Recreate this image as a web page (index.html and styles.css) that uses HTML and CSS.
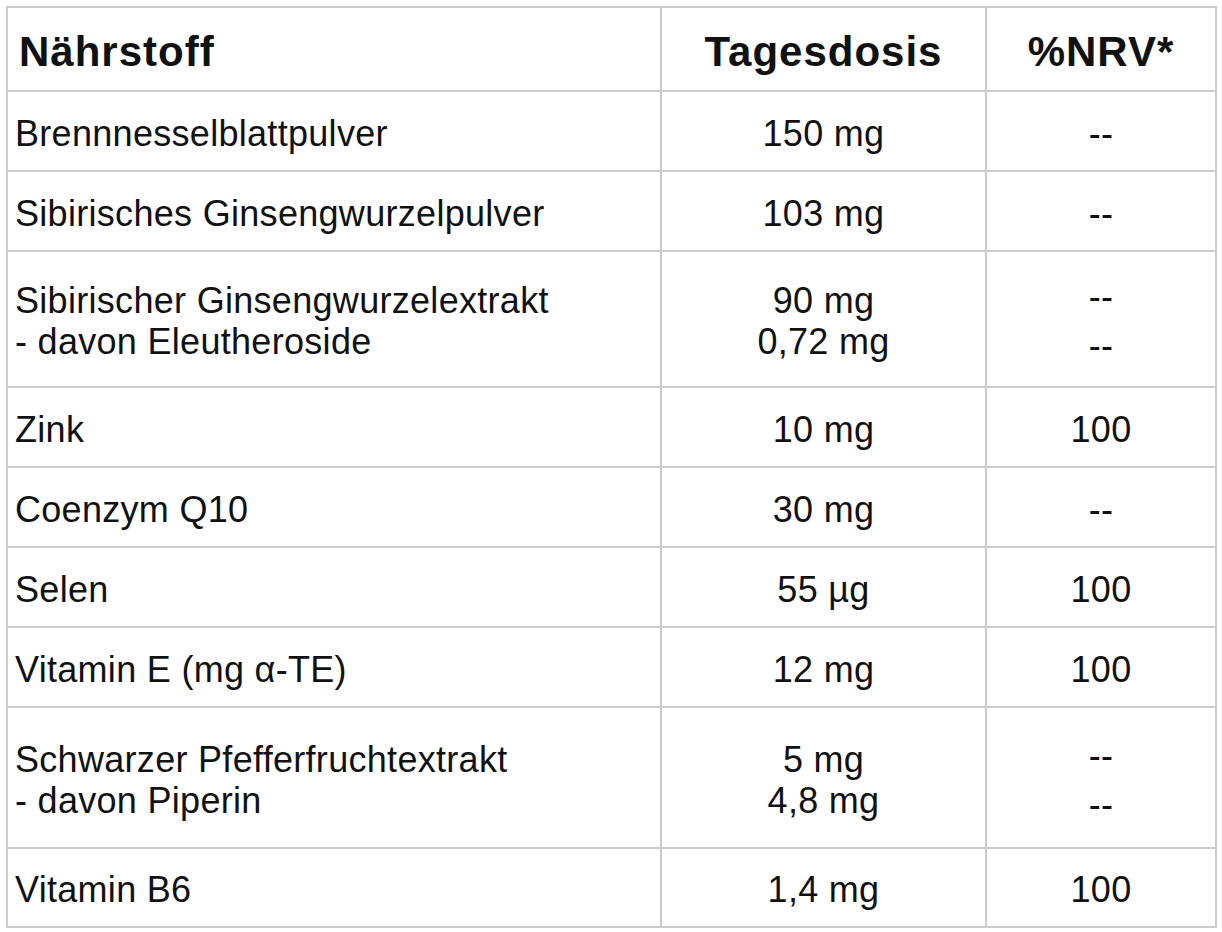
FILE: index.html
```html
<!DOCTYPE html>
<html lang="de">
<head>
<meta charset="utf-8">
<title>Nährstoffe</title>
<link rel="stylesheet" href="styles.css">
</head>
<body>
<div class="wrap">
<table class="nutri">
  <colgroup>
    <col class="col-name">
    <col class="col-dose">
    <col class="col-nrv">
  </colgroup>
  <thead>
    <tr class="head">
      <th class="name">Nährstoff</th>
      <th>Tagesdosis</th>
      <th>%NRV*</th>
    </tr>
  </thead>
  <tbody>
    <tr class="single">
      <td class="name">Brennnesselblattpulver</td>
      <td>150 mg</td>
      <td>--</td>
    </tr>
    <tr class="single">
      <td class="name">Sibirisches Ginsengwurzelpulver</td>
      <td>103 mg</td>
      <td>--</td>
    </tr>
    <tr class="double-a">
      <td class="name">Sibirischer Ginsengwurzelextrakt<br>- davon Eleutheroside</td>
      <td>90 mg<br>0,72 mg</td>
      <td class="pair">--<br>--</td>
    </tr>
    <tr class="single">
      <td class="name">Zink</td>
      <td>10 mg</td>
      <td>100</td>
    </tr>
    <tr class="single">
      <td class="name">Coenzym Q10</td>
      <td>30 mg</td>
      <td>--</td>
    </tr>
    <tr class="single">
      <td class="name">Selen</td>
      <td>55 µg</td>
      <td>100</td>
    </tr>
    <tr class="single">
      <td class="name">Vitamin E (mg α-TE)</td>
      <td>12 mg</td>
      <td>100</td>
    </tr>
    <tr class="double-b">
      <td class="name">Schwarzer Pfefferfruchtextrakt<br>- davon Piperin</td>
      <td>5 mg<br>4,8 mg</td>
      <td class="pair">--<br>--</td>
    </tr>
    <tr class="last">
      <td class="name">Vitamin B6</td>
      <td>1,4 mg</td>
      <td>100</td>
    </tr>
  </tbody>
</table>
</div>
</body>
</html>
```

FILE: styles.css
```css
html, body {
  margin: 0;
  padding: 0;
  background: #ffffff;
}

.wrap {
  padding: 6px 0 0 6px;
}

.nutri {
  border-collapse: collapse;
  table-layout: fixed;
  width: 1209px;
  font-family: "Liberation Sans", Arial, sans-serif;
  color: #111111;
}

.col-name { width: 654px; }
.col-dose { width: 325px; }
.col-nrv { width: 230px; }

.nutri th,
.nutri td {
  border: 2px solid #cbcbcb;
  text-align: center;
  vertical-align: middle;
  padding: 0 8px;
}

.nutri th {
  font-size: 42px;
  font-weight: 700;
  line-height: 48px;
  letter-spacing: 1px;
  padding-top: 6px;
}

.nutri td {
  font-size: 36px;
  font-weight: 400;
  line-height: 41px;
  letter-spacing: 0.3px;
  padding-top: 4px;
}

.nutri th.name {
  text-align: left;
  padding-left: 11px;
}

.nutri td.name {
  text-align: left;
  padding-left: 7px;
}

.nutri td.pair {
  line-height: 49px;
}

.head { height: 84px; }
.single { height: 80px; }
.double-a { height: 136px; }
.double-b { height: 141px; }
.last { height: 79px; }
```
